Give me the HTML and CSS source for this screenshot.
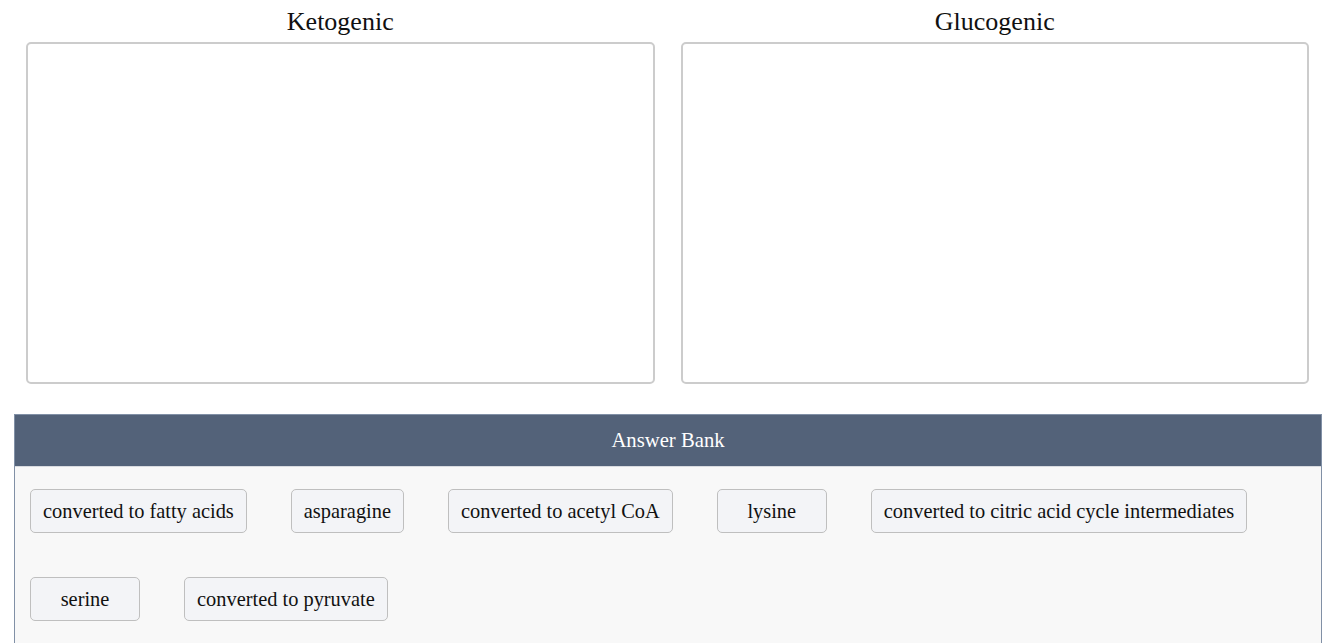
FILE: index.html
```html
<!DOCTYPE html>
<html>
<head>
<meta charset="utf-8">
<link rel="stylesheet" href="styles.css">
</head>
<body>
<div class="page">
  <div class="targets">
    <div class="target">
      <div class="title">Ketogenic</div>
      <div class="dropbox"></div>
    </div>
    <div class="target">
      <div class="title">Glucogenic</div>
      <div class="dropbox"></div>
    </div>
  </div>
  <div class="bank">
    <div class="bank-header">Answer Bank</div>
    <div class="bank-body">
      <div class="chip">converted to fatty acids</div>
      <div class="chip">asparagine</div>
      <div class="chip">converted to acetyl CoA</div>
      <div class="chip">lysine</div>
      <div class="chip">converted to citric acid cycle intermediates</div>
      <div class="chip">serine</div>
      <div class="chip">converted to pyruvate</div>
    </div>
  </div>
</div>
</body>
</html>
```

FILE: styles.css
```css
html, body {
  margin: 0;
  padding: 0;
  background: #ffffff;
}
body {
  font-family: "Liberation Serif", "Times New Roman", serif;
  color: #111;
}
.page {
  padding-top: 7px;
}
.targets {
  display: grid;
  grid-template-columns: 1fr 1fr;
  column-gap: 26px;
  padding: 0 25px 0 26px;
}
.title {
  font-size: 26px;
  line-height: 30px;
  text-align: center;
  margin-bottom: 5px;
}
.dropbox {
  height: 338px;
  border: 2px solid #cccccc;
  border-radius: 5px;
  background: #fff;
}
.bank {
  margin: 30px 12px 0 14px;
  border: 1px solid #8190a6;
  border-bottom: none;
  background: #f8f8f8;
  height: 228px;
}
.bank-header {
  background: #536279;
  color: #ffffff;
  font-size: 20.7px;
  line-height: 51px;
  height: 51px;
  text-align: center;
  border-bottom: 1px solid #d8dbe0;
}
.bank-body {
  display: flex;
  flex-wrap: wrap;
  gap: 44px 44px;
  padding: 22px 15px;
}
.chip {
  box-sizing: border-box;
  height: 44px;
  min-width: 110px;
  padding: 0 12px;
  border: 1px solid #bfbfbf;
  border-radius: 5px;
  background: #f3f4f7;
  font-size: 20.4px;
  line-height: 42px;
  text-align: center;
  white-space: nowrap;
}
```
